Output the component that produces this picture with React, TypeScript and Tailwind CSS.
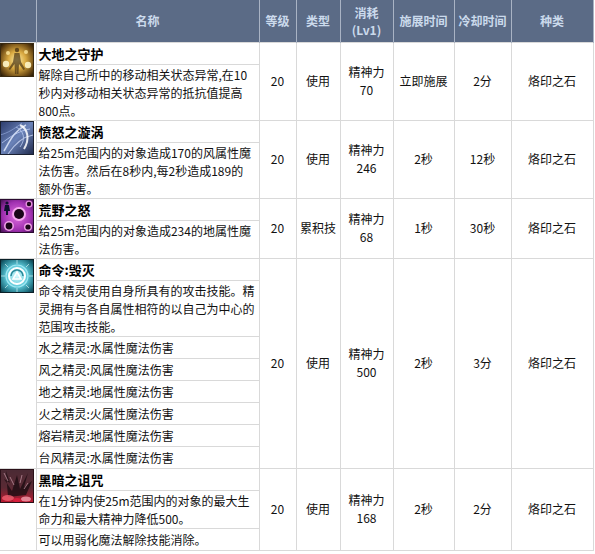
import React from "react";

type Skill = {
  icon: React.ReactNode;
  name: string;
  desc: string[];
  extra: string[];
  level: string;
  type: string;
  cost: string;
  cast: string;
  cooldown: string;
  kind: string;
};

function EarthIcon() {
  return (
    <svg width="34" height="34" viewBox="0 0 34 34">
      <defs>
        <radialGradient id="eg" cx="50%" cy="50%" r="65%">
          <stop offset="0" stopColor="#fff0a8" />
          <stop offset="0.4" stopColor="#d8a840" />
          <stop offset="0.8" stopColor="#6a4814" />
          <stop offset="1" stopColor="#2a1c08" />
        </radialGradient>
      </defs>
      <rect width="34" height="34" fill="url(#eg)" />
      <circle cx="6" cy="21" r="3.2" fill="#fff6c8" opacity="0.9" />
      <circle cx="28" cy="22" r="3.2" fill="#fff6c8" opacity="0.9" />
      <circle cx="8" cy="10" r="2" fill="#ffeaa0" opacity="0.8" />
      <circle cx="26" cy="9" r="2" fill="#ffeaa0" opacity="0.8" />
      <circle cx="17" cy="7" r="2.2" fill="#4a3414" opacity="0.8" />
      <path d="M14.5 10 L19.5 10 L21 19 L25 26 L23.5 27 L19 21 L18.5 31 L17 31 L17 23 L16.5 31 L15 31 L14.5 21 L10 27 L8.5 26 L13 19 Z" fill="#4a3414" opacity="0.7" />
      <rect x="0.5" y="0.5" width="33" height="33" fill="none" stroke="#3a2a10" />
    </svg>
  );
}

function WindIcon() {
  return (
    <svg width="34" height="34" viewBox="0 0 34 34">
      <defs>
        <linearGradient id="wg" x1="0" y1="0" x2="1" y2="1">
          <stop offset="0" stopColor="#2a3a6a" />
          <stop offset="0.5" stopColor="#6a82b8" />
          <stop offset="1" stopColor="#1c2648" />
        </linearGradient>
      </defs>
      <rect width="34" height="34" fill="url(#wg)" />
      <path d="M4 30 C10 20, 14 10, 26 4" stroke="#e8f0ff" strokeWidth="1.5" fill="none" opacity="0.8" />
      <path d="M2 22 C10 16, 18 10, 30 8" stroke="#c8d8ff" strokeWidth="1" fill="none" opacity="0.7" />
      <path d="M8 33 C14 24, 22 16, 33 14" stroke="#dce6ff" strokeWidth="1.2" fill="none" opacity="0.7" />
      <path d="M20 4 C28 8, 30 18, 24 28" stroke="#ffffff" strokeWidth="2" fill="none" opacity="0.85" />
      <path d="M16 6 C24 10, 26 18, 20 26" stroke="#b8caf0" strokeWidth="1" fill="none" opacity="0.8" />
      <path d="M0 14 C8 12, 14 8, 22 2" stroke="#9fb4e6" strokeWidth="1" fill="none" opacity="0.6" />
      <rect x="0.5" y="0.5" width="33" height="33" fill="none" stroke="#1a2030" />
    </svg>
  );
}

function WildIcon() {
  return (
    <svg width="34" height="34" viewBox="0 0 34 34">
      <defs>
        <radialGradient id="pg" cx="50%" cy="50%" r="70%">
          <stop offset="0" stopColor="#e070e0" />
          <stop offset="0.6" stopColor="#a030b0" />
          <stop offset="1" stopColor="#3a0c48" />
        </radialGradient>
      </defs>
      <rect width="34" height="34" fill="url(#pg)" />
      <circle cx="19" cy="15" r="7" fill="#f8a8f0" />
      <circle cx="19" cy="15" r="5" fill="#1a0618" />
      <circle cx="9" cy="27" r="5" fill="#f0a0e8" />
      <circle cx="9" cy="27" r="3.4" fill="#1a0618" />
      <circle cx="28" cy="28" r="4" fill="#f0a0e8" />
      <circle cx="28" cy="28" r="2.6" fill="#1a0618" />
      <circle cx="29" cy="5" r="3.5" fill="#e890e0" />
      <circle cx="29" cy="5" r="2.2" fill="#1a0618" />
      <circle cx="7" cy="4" r="1.6" fill="#101030" />
      <path d="M5 6 L9 6 L10 12 L8 12 L8 16 L6 16 L6 12 L4 12 Z" fill="#101030" />
      <rect x="0.5" y="0.5" width="33" height="33" fill="none" stroke="#2a0a30" />
    </svg>
  );
}

function CommandIcon() {
  return (
    <svg width="34" height="34" viewBox="0 0 34 34">
      <defs>
        <radialGradient id="cg" cx="50%" cy="50%" r="70%">
          <stop offset="0" stopColor="#d8fbff" />
          <stop offset="0.45" stopColor="#5cc8d8" />
          <stop offset="0.8" stopColor="#1a6878" />
          <stop offset="1" stopColor="#0c2a34" />
        </radialGradient>
      </defs>
      <rect width="34" height="34" fill="url(#cg)" />
      <g stroke="#e8ffff" strokeWidth="1" opacity="0.6">
        <path d="M17 1 L17 5 M17 29 L17 33 M1 17 L5 17 M29 17 L33 17 M5 5 L8 8 M26 26 L29 29 M29 5 L26 8 M5 29 L8 26" />
      </g>
      <circle cx="17" cy="17" r="11" fill="none" stroke="#bff6ff" strokeWidth="1.2" opacity="0.7" />
      <circle cx="17" cy="17" r="8" fill="none" stroke="#ffffff" strokeWidth="2" />
      <path d="M11 17 A6 6 0 0 1 23 17" fill="none" stroke="#2a8898" strokeWidth="1.5" />
      <path d="M17 13 L21 20 L13 20 Z" fill="none" stroke="#ffffff" strokeWidth="1.6" />
      <rect x="0.5" y="0.5" width="33" height="33" fill="none" stroke="#0a2028" />
    </svg>
  );
}

function CurseIcon() {
  return (
    <svg width="34" height="34" viewBox="0 0 34 34">
      <defs>
        <linearGradient id="dg" x1="0" y1="0" x2="0" y2="1">
          <stop offset="0" stopColor="#4a2a34" />
          <stop offset="0.55" stopColor="#5a2a34" />
          <stop offset="1" stopColor="#c01830" />
        </linearGradient>
      </defs>
      <rect width="34" height="34" fill="url(#dg)" />
      <path d="M6 2 L10 14 L4 10 L12 22 L17 6 L20 20 L28 4 L24 18 L32 12 L26 26 L8 28 Z" fill="#1c0c12" opacity="0.8" />
      <path d="M10 8 L14 16 M22 6 L20 14 M28 14 L24 20 M4 4 L8 12" stroke="#c89aa8" strokeWidth="1" opacity="0.7" />
      <ellipse cx="8" cy="29" rx="6" ry="3" fill="#f06070" opacity="0.8" />
      <ellipse cx="26" cy="30" rx="5" ry="2.5" fill="#ffb0c0" opacity="0.7" />
      <ellipse cx="17" cy="31" rx="4" ry="2" fill="#e02040" opacity="0.8" />
      <rect x="0.5" y="0.5" width="33" height="33" fill="none" stroke="#2a1018" />
    </svg>
  );
}

const skills: Skill[] = [
  {
    icon: <EarthIcon />,
    name: "大地之守护",
    desc: ["解除自己所中的移动相关状态异常,在10", "秒内对移动相关状态异常的抵抗值提高", "800点。"],
    extra: [],
    level: "20",
    type: "使用",
    cost: "70",
    cast: "立即施展",
    cooldown: "2分",
    kind: "烙印之石",
  },
  {
    icon: <WindIcon />,
    name: "愤怒之漩涡",
    desc: ["给25m范围内的对象造成170的风属性魔", "法伤害。然后在8秒内,每2秒造成189的", "额外伤害。"],
    extra: [],
    level: "20",
    type: "使用",
    cost: "246",
    cast: "2秒",
    cooldown: "12秒",
    kind: "烙印之石",
  },
  {
    icon: <WildIcon />,
    name: "荒野之怒",
    desc: ["给25m范围内的对象造成234的地属性魔", "法伤害。"],
    extra: [],
    level: "20",
    type: "累积技",
    cost: "68",
    cast: "1秒",
    cooldown: "30秒",
    kind: "烙印之石",
  },
  {
    icon: <CommandIcon />,
    name: "命令:毁灭",
    desc: ["命令精灵使用自身所具有的攻击技能。精", "灵拥有与各自属性相符的以自己为中心的", "范围攻击技能。"],
    extra: [
      "水之精灵:水属性魔法伤害",
      "风之精灵:风属性魔法伤害",
      "地之精灵:地属性魔法伤害",
      "火之精灵:火属性魔法伤害",
      "熔岩精灵:地属性魔法伤害",
      "台风精灵:水属性魔法伤害",
    ],
    level: "20",
    type: "使用",
    cost: "500",
    cast: "2秒",
    cooldown: "3分",
    kind: "烙印之石",
  },
  {
    icon: <CurseIcon />,
    name: "黑暗之诅咒",
    desc: ["在1分钟内使25m范围内的对象的最大生", "命力和最大精神力降低500。"],
    extra: ["可以用弱化魔法解除技能消除。"],
    level: "20",
    type: "使用",
    cost: "168",
    cast: "2秒",
    cooldown: "2分",
    kind: "烙印之石",
  },
];

const th = "border-x border-[#a9b3c4] font-bold text-[12px] text-[#cbdaec] text-center align-middle leading-[17px]";
const td = "border border-[#d9d9d9] text-center align-middle text-[12px] leading-[18px]";

export default function App() {
  return (
    <div className="w-[595px] h-[554px] bg-white font-['Noto_Sans_CJK_SC',sans-serif] text-[#111]">
      <table className="w-[593px] table-fixed border-collapse">
        <colgroup>
          <col className="w-[36px]" />
          <col className="w-[223px]" />
          <col className="w-[37px]" />
          <col className="w-[44px]" />
          <col className="w-[53px]" />
          <col className="w-[61px]" />
          <col className="w-[57px]" />
          <col className="w-[82px]" />
        </colgroup>
        <thead>
          <tr className="h-[42px] bg-[#5b6b86]">
            <th className={`${th} border-l-0`}></th>
            <th className={th}>名称</th>
            <th className={th}>等级</th>
            <th className={th}>类型</th>
            <th className={th}>
              消耗
              <br />
              (Lv1)
            </th>
            <th className={th}>施展时间</th>
            <th className={th}>冷却时间</th>
            <th className={th}>种类</th>
          </tr>
        </thead>
        <tbody>
          {skills.map((s) => (
            <tr key={s.name}>
              <td className="border border-l-0 border-[#d9d9d9] p-0 align-top">
                <div className="flex">{s.icon}</div>
              </td>
              <td className="border border-[#d9d9d9] p-0 align-top text-left text-[12px]">
                <div className="pl-[2px] text-[13px] font-bold leading-[21px] text-black">{s.name}</div>
                <div className="border-t border-[#d9d9d9] pl-[2px] pt-[1px] leading-[18px]">
                  {s.desc.map((line) => (
                    <div key={line}>{line}</div>
                  ))}
                </div>
                {s.extra.map((line) => (
                  <div key={line} className="border-t border-[#d9d9d9] pl-[2px] leading-[21px]">
                    {line}
                  </div>
                ))}
              </td>
              <td className={td}>{s.level}</td>
              <td className={td}>{s.type}</td>
              <td className={td}>
                精神力
                <br />
                {s.cost}
              </td>
              <td className={td}>{s.cast}</td>
              <td className={td}>{s.cooldown}</td>
              <td className={td}>{s.kind}</td>
            </tr>
          ))}
        </tbody>
      </table>
    </div>
  );
}
